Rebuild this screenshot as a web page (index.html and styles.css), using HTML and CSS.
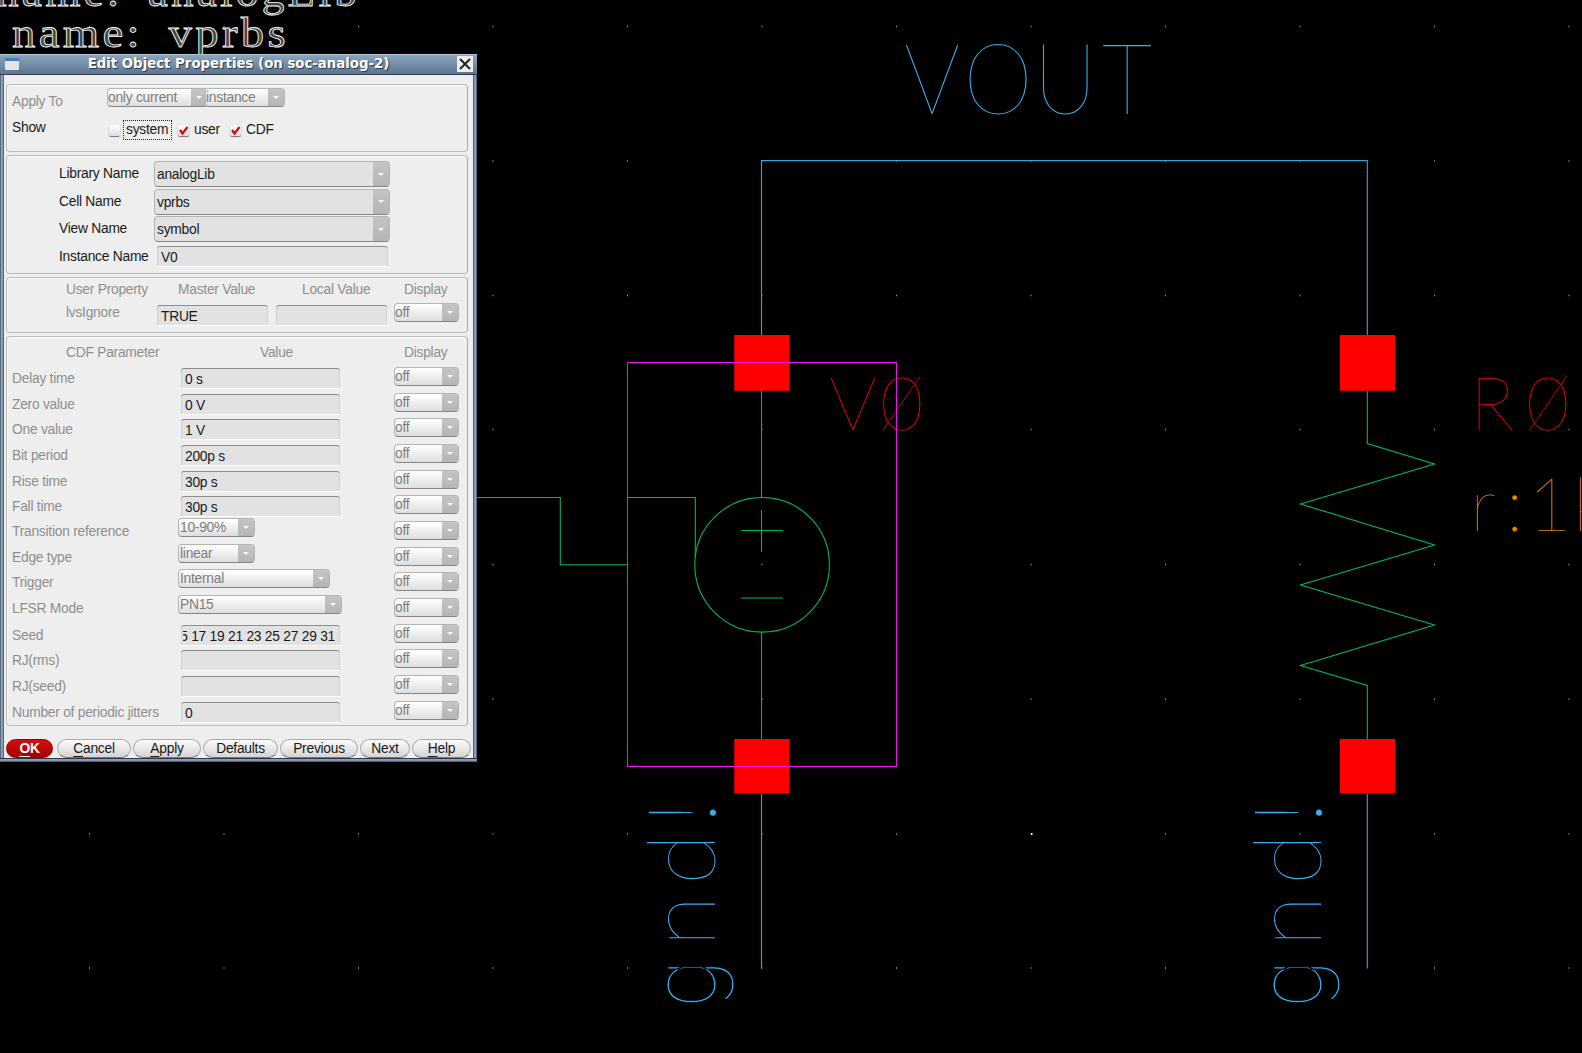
FILE: index.html
```html
<!DOCTYPE html>
<html lang="en">
<head>
<meta charset="utf-8">
<title>Edit Object Properties</title>
<link rel="stylesheet" href="styles.css">
</head>
<body>
<svg class="schematic" width="1582" height="1053" viewBox="0 0 1582 1053">
  <g class="grid-dots">
    <path d="M89 26.5H1582M89 161H1582M89 295.5H1582M89 429.5H1582M89 564.5H1582M89 699H1582M89 834H1582M89 968H1582"/>
  </g>
  <rect class="cursor" x="1031" y="833" width="1.5" height="2"/>
  <text class="note" x="-4" y="6" textLength="364" lengthAdjust="spacingAndGlyphs">name: analogLib</text>
  <text class="note" x="12" y="46.5" textLength="277" lengthAdjust="spacingAndGlyphs">name: vprbs</text>

  <path class="wire" d="M761.5 335V160.6H1367.3V335M761.5 794V968.5M1367.3 794V968.5"/>
  <path class="device" d="M477 497.5H560.3V564.7H627M628 497.5H695.3V557M761.5 391V497M761.5 632V739M741 530.5H783M761.5 510V552M741 598H783"/>
  <circle class="device" cx="762.1" cy="564.8" r="67.3"/>
  <path class="device" d="M1367.3 391V443.5L1434.5 464L1300.5 504L1434.5 545L1300.5 585L1434.5 625L1300.5 665.5L1367.3 685.5V739"/>
  <path class="pin" d="M734.3 335H789.7V390.7H734.3ZM1340 335H1395V390.7H1340ZM734.3 739H789.7V793.6H734.3ZM1340 739H1395V793.6H1340Z"/>

  <text class="label net" font-size="98" transform="translate(904 114) scale(.9 1)" x="0 66 144 220">VOUT</text>
  <text class="label ref" font-size="75" y="429.5" x="829 880">V0</text>
  <text class="label ref" font-size="75" y="429.5" x="1470 1526">R0</text>
  <path class="slash" d="M883 430L920 376.5M1529.5 430L1566.5 376.5"/>
  <text class="label param" font-size="75" y="530.5" x="1470 1506 1528 1573">r:1k</text>
  <text class="label net" font-size="95" transform="translate(715 1004) rotate(-90)" x="-4 57 119 180"><tspan class="tail">g</tspan>nd!</text>
  <text class="label net" font-size="95" transform="translate(1320.5 1004) rotate(-90)" x="-4 57 119 180"><tspan class="tail">g</tspan>nd!</text>
  <rect class="selection" x="627.5" y="362.5" width="269" height="404"/>
</svg>

<section class="window">
  <header class="titlebar">
    <svg class="app-icon" width="14" height="12" viewBox="0 0 14 12"><rect width="14" height="12" rx="1" fill="#e4e4e2"/><rect width="14" height="3" fill="#4a7dbd"/></svg>
    <h1>Edit Object Properties (on soc-analog-2)</h1>
    <span class="close"><svg width="16" height="16" viewBox="0 0 16 16"><path d="M3 3L13 13M13 3L3 13" stroke="#222" stroke-width="2"/></svg></span>
  </header>
  <div class="content">
    <fieldset class="group scope">
      <div class="scope-row">
        <span class="dim">Apply To</span>
        <div class="combos"><span class="combo w100">only current<i></i></span><span class="combo w80">instance<i></i></span></div>
      </div>
      <div class="scope-row show">
        <span>Show</span>
        <div class="checks">
          <b class="check"></b><span class="focus">system</span>
          <b class="check"><svg width="11" height="11" viewBox="0 0 11 11"><path d="M2 5L4.5 8.5L9.5 2" /></svg></b><span class="user">user</span>
          <b class="check"><svg width="11" height="11" viewBox="0 0 11 11"><path d="M2 5L4.5 8.5L9.5 2" /></svg></b><span>CDF</span>
        </div>
      </div>
    </fieldset>

    <fieldset class="group identity">
      <div class="id-row"><span>Library Name</span><span class="combo flat">analogLib<i></i></span></div>
      <div class="id-row"><span>Cell Name</span><span class="combo flat">vprbs<i></i></span></div>
      <div class="id-row"><span>View Name</span><span class="combo flat">symbol<i></i></span></div>
      <div class="id-row"><span>Instance Name</span><span class="field name">V0</span></div>
    </fieldset>

    <fieldset class="group property">
      <div class="prop-head dim"><span>User Property</span><span>Master Value</span><span>Local Value</span><span>Display</span></div>
      <div class="prop-row"><span class="dim">lvsIgnore</span><span class="field">TRUE</span><span class="field"></span><span class="combo off">off<i></i></span></div>
    </fieldset>

    <fieldset class="group cdf">
      <div class="cdf-head dim"><span>CDF Parameter</span><span>Value</span><span>Display</span></div>
      <div class="cdf-row"><span>Delay time</span><span class="field">0 s</span><span class="combo off">off<i></i></span></div>
      <div class="cdf-row"><span>Zero value</span><span class="field">0 V</span><span class="combo off">off<i></i></span></div>
      <div class="cdf-row"><span>One value</span><span class="field">1 V</span><span class="combo off">off<i></i></span></div>
      <div class="cdf-row"><span>Bit period</span><span class="field">200p s</span><span class="combo off">off<i></i></span></div>
      <div class="cdf-row"><span>Rise time</span><span class="field">30p s</span><span class="combo off">off<i></i></span></div>
      <div class="cdf-row"><span>Fall time</span><span class="field">30p s</span><span class="combo off">off<i></i></span></div>
      <div class="cdf-row pick"><span>Transition reference</span><span class="combo w77">10-90%<i></i></span><span class="combo off">off<i></i></span></div>
      <div class="cdf-row pick"><span>Edge type</span><span class="combo w77">linear<i></i></span><span class="combo off">off<i></i></span></div>
      <div class="cdf-row pick"><span>Trigger</span><span class="combo w152">Internal<i></i></span><span class="combo off">off<i></i></span></div>
      <div class="cdf-row pick"><span>LFSR Mode</span><span class="combo w163">PN15<i></i></span><span class="combo off">off<i></i></span></div>
      <div class="cdf-row"><span>Seed</span><span class="field scrolled"><span>5 17 19 21 23 25 27 29 31</span></span><span class="combo off">off<i></i></span></div>
      <div class="cdf-row"><span>RJ(rms)</span><span class="field"></span><span class="combo off">off<i></i></span></div>
      <div class="cdf-row"><span>RJ(seed)</span><span class="field"></span><span class="combo off">off<i></i></span></div>
      <div class="cdf-row"><span>Number of periodic jitters</span><span class="field">0</span><span class="combo off">off<i></i></span></div>
    </fieldset>

    <footer class="buttons">
      <button class="ok"><u>O</u>K</button><button><u>C</u>ancel</button><button><u>A</u>pply</button><button>Defaults</button><button>Previous</button><button>Next</button><button><u>H</u>elp</button>
    </footer>
  </div>
</section>
</body>
</html>
```
FILE: styles.css
```css
* { box-sizing: border-box; }
html, body { margin: 0; height: 100%; overflow: hidden; background: #000; }
body { position: relative; font: 13.8px/16px "Liberation Sans", Arial, sans-serif; letter-spacing: -.25px; color: #1a1a1a; }

.schematic { display: block; letter-spacing: 0; }
.grid-dots path { stroke: #999; stroke-width: 1.3; stroke-dasharray: 1 133.5; fill: none; }
.cursor { fill: #fff; }
.note { font: 43px "Liberation Serif", serif; letter-spacing: 3px; word-spacing: 10px; fill: #444; stroke: #fff; stroke-width: .8; }
.wire, .device { fill: none; stroke-width: 1.1; }
.wire { stroke: #35a5dc; }
.device { stroke: #00b562; }
.pin { fill: #f00; }
.label { font-family: Lato, Inter, sans-serif; font-weight: 100; }
.tail { font-family: Roboto, Inter, sans-serif; font-size: 89px; stroke: #000; stroke-width: 1px; }
.net { fill: #38aef0; }
.ref { fill: #ff0000; }
.param { fill: #ee8208; }
.slash { stroke: #c00000; fill: none; }
.selection { fill: none; stroke: #f010f0; }

.window { position: absolute; left: 0; top: 54px; width: 477px; height: 708px; padding: 0 4px 4px; border-top: 1px solid #b4c4d4; display: flex; flex-direction: column;
  background: linear-gradient(#334, #334 1px, #8ea4bd 1px, #7b93ae 3px, #26323f 4px) 0 100% / 100% 4px no-repeat, linear-gradient(90deg, #26323f 0, #8ea4bd 1px, #8097b2 3px, #334 4px, #334 473px, #7b93ae 474px, #8ea4bd 476px, #26323f 477px); }
.titlebar { height: 20px; margin: 0 -4px; padding: 0 4px 1px 5px; display: grid; grid-template-columns: 14px 1fr 16px; align-items: center; background: linear-gradient(#8ca5bf, #5d7591); border-bottom: 1px solid #333c48; }
.titlebar h1 { margin: 0 0 0 1px; text-align: center; font: bold 13.3px/16px "DejaVu Sans", sans-serif; letter-spacing: 0; color: #fff; text-shadow: 1px 1px 1px #26384c; }
.close { width: 16px; height: 16px; margin-top: -1px; background: #efeeec; }
.close svg, .app-icon { display: block; }
.content { flex: 1; background: #eee; padding: 9px 5px 0 2px; }

.group { margin: 0 0 3px; border: 1px solid #bdbdbd; border-right-color: #aaa; border-radius: 4px; box-shadow: inset 1px 1px #f8f8f8; padding: 0; min-width: 0; }
.dim { color: #8f8f8f; }
.scope { height: 68px; padding: 3px 0 0 5px; }
.scope-row { display: grid; grid-template-columns: 95px 1fr; height: 26px; }
.scope-row > span { padding-top: 6px; }
.combos { display: flex; }
.combos .combo + .combo { margin-left: -3px; }
.scope-row.show > span { padding-top: 6px; }
.checks { display: flex; align-items: center; height: 20px; margin: 6px 0 0 2px; }
.check { width: 11px; height: 11px; border-radius: 2px; background: linear-gradient(#fff, #ddd); box-shadow: 0 1px 1px #777, 0 0 1px #aaa; }
.check svg { display: block; fill: none; stroke: #d00; stroke-width: 2.2; }
.focus { border: 1px dotted #222; height: 20px; line-height: 18px; width: 49px; padding-left: 2px; margin: 0 6px 0 3px; }
.check + span:not(.focus) { margin-left: 5px; }
.user { width: 36px; }

.combo { position: relative; height: 19px; line-height: 18px; padding-left: 1px; color: #7d7d7d; border: 1px solid #b4b4b4; border-bottom-color: #858585; border-radius: 4px; background: linear-gradient(#fff, #dedede); overflow: hidden; display: flex; justify-content: space-between; }
.combo i { width: 16px; background: linear-gradient(#c4c4c4, #b5b5b5); display: grid; place-items: center; }
.combo i::after { content: ""; border: 3px solid transparent; border-top-color: #f8f8f8; border-bottom: 0; }
.w100 { width: 101px; } .w80 { width: 80px; }
.w100, .w80, .off { padding-left: 0; }
.w77 { width: 77px; } .w152 { width: 152px; } .w163 { width: 164px; }
.off { width: 65px; }
.flat { height: 26px; line-height: 26px; padding-left: 2px; color: #1a1a1a; background: #e2e2e2; width: 236px; }
.field { display: block; height: 21px; line-height: 21px; padding: 0 4px; background: #e2e2e2; border-radius: 3px 3px 0 0; border-top: 1px solid #8c8c8c; border-bottom: 1px solid #fcfcfc; box-shadow: inset 1px 0 #cfcfcf, inset -1px 0 #d4d4d4; }

.identity { height: 119px; padding: 5px 0 0 52px; }
.id-row { display: grid; grid-template-columns: 95px 236px; height: 27.6px; }
.id-row > :first-child { padding-top: 5px; }
.field.name { margin: 2px 2px 0 3px; }

.property { height: 56px; padding: 3px 0 0; }
.prop-head { display: grid; grid-template-columns: 59px 112px 124px 102px 1fr; height: 22px; }
.prop-head span { padding-top: 1px; }
.prop-head::before { content: ""; }
.prop-row { display: grid; grid-template-columns: 91px 119px 118px 65px; padding-left: 59px; align-items: start; }
.prop-row .dim { padding-top: 2px; }
.prop-row .field { margin: 2px 8px 0 0; }
.prop-row .field + .field { margin-right: 7px; }

.cdf { height: 390px; padding: 8px 0 0 5px; }
.cdf-head { display: grid; grid-template-columns: 54px 194px 144px 1fr; height: 22px; }
.cdf-head::before { content: ""; }
.cdf-row { display: grid; grid-template-columns: 169px 213px 65px; height: 25.67px; align-items: start; }
.cdf-row > :first-child { padding-top: 4px; color: #8f8f8f; white-space: nowrap; }
.cdf-row .field { width: 159px; margin-top: 1px; }
.cdf-row.pick > :first-child { padding-top: 3px; }
.cdf-row.pick > :nth-child(2) { margin: -3px 0 0 -3px; }
.field.scrolled { padding: 0 5px 0 2px; }
.scrolled span { display: flex; justify-content: flex-end; overflow: hidden; white-space: nowrap; }

.buttons { display: grid; grid-template-columns: 49px 74px 68px 75px 78px 50px 59px; gap: 2px; margin-top: 12.5px; }
.buttons button { font: inherit; letter-spacing: inherit; color: #1a1a1a; height: 19px; line-height: 18px; padding: 0; border: 1px solid #aaa; border-bottom: 1px solid #777; border-radius: 10px; background: linear-gradient(#fcfcfc, #d4d4d4); }
.buttons .ok { width: 47px; color: #fff; font-weight: bold; background: linear-gradient(#d01010, #a80000); border-color: #900; }
.buttons u { text-underline-offset: 3px; }
```
